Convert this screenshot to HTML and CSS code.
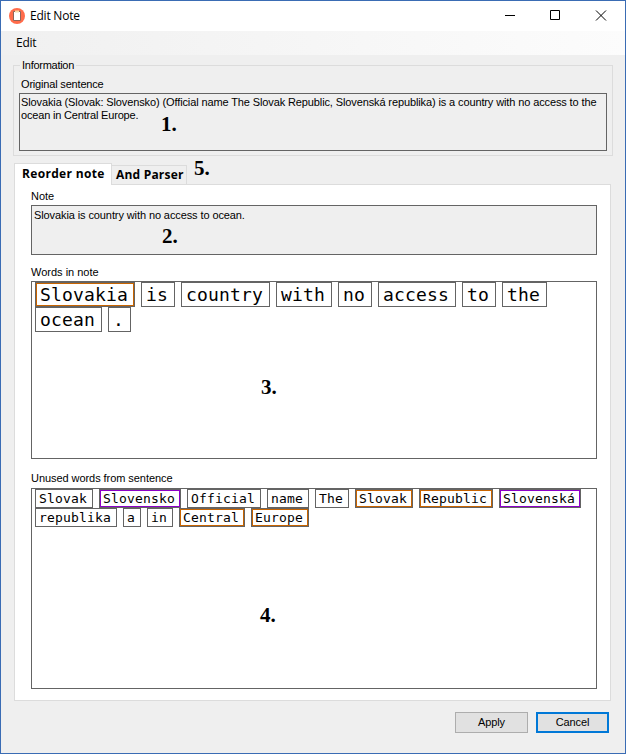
FILE: index.html
```
<!DOCTYPE html>
<html lang="en">
<head>
<meta charset="utf-8">
<title>Edit Note</title>
<link rel="stylesheet" href="styles.css">
</head>
<body>
<main class="window">
  <header class="titlebar">
    <svg class="app-icon" width="16" height="16" viewBox="0 0 16 16"><circle cx="8" cy="8" r="8" fill="#ff6b4a"/><path d="M4.500 3.500h7v9h-7z" fill="#fff" stroke="#8f6357"/><path d="M6 2.500h4v2H6z" fill="#f7dca8"/></svg>
    <h1 class="title">Edit Note</h1>
    <svg class="controls" width="120" height="30" viewBox="0 0 120 30" fill="none" stroke="#000"><path d="M0 14.500h10M45.500 9.500h9v9h-9zM91 9.500l10 10M101 9.500l-10 10"/></svg>
  </header>
  <nav class="menubar">Edit</nav>
  <fieldset class="group">
    <legend>Information</legend>
    <label class="label original-label">Original sentence</label>
    <div class="field original">Slovakia (Slovak: Slovensko) (Official name The Slovak Republic, Slovenská republika) is a country with no access to the<br><span class="last-line">ocean in Central Europe.</span><b class="mark mark-1">1.</b></div>
  </fieldset>
  <div class="tabs">
    <div class="tab active">Reorder note</div>
    <div class="tab">And Parser</div>
    <b class="mark mark-5">5.</b>
  </div>
  <section class="page">
    <label class="label">Note</label>
    <div class="field note">Slovakia is country with no access to ocean.<b class="mark mark-2">2.</b></div>
    <label class="label">Words in note</label>
    <div class="words large">
      <span class="word name">Slovakia</span><span class="word">is</span><span class="word">country</span><span class="word">with</span><span class="word">no</span><span class="word">access</span><span class="word">to</span><span class="word">the</span><span class="word">ocean</span><span class="word">.</span>
      <b class="mark mark-3">3.</b>
    </div>
    <label class="label unused-label">Unused words from sentence</label>
    <div class="words small">
      <span class="word">Slovak</span><span class="word foreign">Slovensko</span><span class="word">Official</span><span class="word">name</span><span class="word">The</span><span class="word name">Slovak</span><span class="word name">Republic</span><span class="word foreign">Slovenská</span><span class="word">republika</span><span class="word">a</span><span class="word">in</span><span class="word name">Central</span><span class="word name">Europe</span>
      <b class="mark mark-4">4.</b>
    </div>
  </section>
  <footer class="actions"><button>Apply</button><button class="default">Cancel</button></footer>
</main>
</body>
</html>
```
FILE: styles.css
```
* { box-sizing: border-box; }
body { margin: 0; }
.window {
  width: 626px; height: 754px; border: 1px solid #3a6cb4; background: #efefef;
  font: 11px/13px "Liberation Sans", Arial, sans-serif; color: #000;
  display: flex; flex-direction: column; overflow: hidden;
}
.titlebar { height: 30px; flex: none; background: #fff; display: flex; align-items: center; padding-left: 8px; }
.app-icon { margin-right: 5px; }
.title { margin: 0; font: 12px/16px "Open Sans", sans-serif; letter-spacing: -.22px; flex: 1; }
.menubar { height: 24px; flex: none; padding: 4px 15px; font: 12px/16px "Open Sans", sans-serif; letter-spacing: -.25px; background: linear-gradient(90deg, #f0f0f0, #fcfcfc); }
.group { position: relative; margin: 4px 12px 0; width: 600px; min-width: 0; height: 97px; flex: none; border: 1px solid #dcdcdc; padding: 0 5px; }
.group legend { margin-left: 1px; padding: 0 2px; height: 13px; letter-spacing: -.27px; }
.label { display: block; height: 13px; }
.original-label { margin: 6px 0 2px 2px; letter-spacing: -.18px; }
.unused-label { letter-spacing: -.06px; }
.field { position: relative; border: 1px solid #646464; background: #efefef; padding: 2px 1px; white-space: nowrap; }
.original { height: 58px; letter-spacing: -.118px; }
.last-line { letter-spacing: -.18px; }
.tabs { position: relative; z-index: 1; display: flex; align-items: flex-end; margin: 7px 0 -1px 13px; height: 22px; font: bold 12px/16px "Open Sans", sans-serif; }
.tab { height: 20px; width: 75px; border: 1px solid #dcdcdc; border-left: 0; padding: 1px 4px; white-space: nowrap; letter-spacing: .2px; }
.tab.active { height: 22px; width: 98px; background: #fff; border-left: 1px solid #dcdcdc; border-bottom: 0; padding: 2px 7px; letter-spacing: .32px; }
.page { margin: 0 0 0 13px; width: 597px; height: 517px; flex: none; background: #fff; border: 1px solid #dcdcdc; padding: 5px 13px 0 16px; }
.note { height: 50px; margin: 2px 0 11px; padding: 3px 2px; letter-spacing: -.1px; }
.words { position: relative; display: flex; flex-wrap: wrap; align-content: flex-start; column-gap: 6px; border: 1px solid #646464; padding-left: 3px; font-family: "DejaVu Sans Mono", monospace; }
.large { height: 178px; margin: 2px 0 13px; font-size: 18px; letter-spacing: .163px; }
.small { height: 201px; margin-top: 3px; font-size: 13px; letter-spacing: .173px; padding-right: 8px; }
.word { border: 1px solid #646464; }
.large .word { height: 25px; line-height: 23px; padding: 0 6px 0 4px; }
.small .word { height: 19px; line-height: 17px; padding: 0 5px 0 3px; }
.name { box-shadow: inset 0 0 0 1px #c86400; }
.foreign { box-shadow: inset 0 0 0 1px #8c00c8; }
.mark { position: absolute; font: bold 21px/24px "Liberation Serif", serif; letter-spacing: 0; }
.mark-1 { left: 141px; top: 18px; }
.mark-2 { left: 130px; top: 18px; }
.mark-3 { left: 229px; top: 93px; }
.mark-4 { left: 228px; top: 114px; }
.mark-5 { left: 180px; top: -7px; }
.actions { display: flex; justify-content: flex-end; gap: 8px; padding: 11px 16px 0 0; }
button { width: 73px; height: 21px; border: 1px solid #adadad; background: #e1e1e1; padding: 0; font: inherit; color: #000; letter-spacing: -.1px; }
.default { border: 2px solid #0078d7; }
```
